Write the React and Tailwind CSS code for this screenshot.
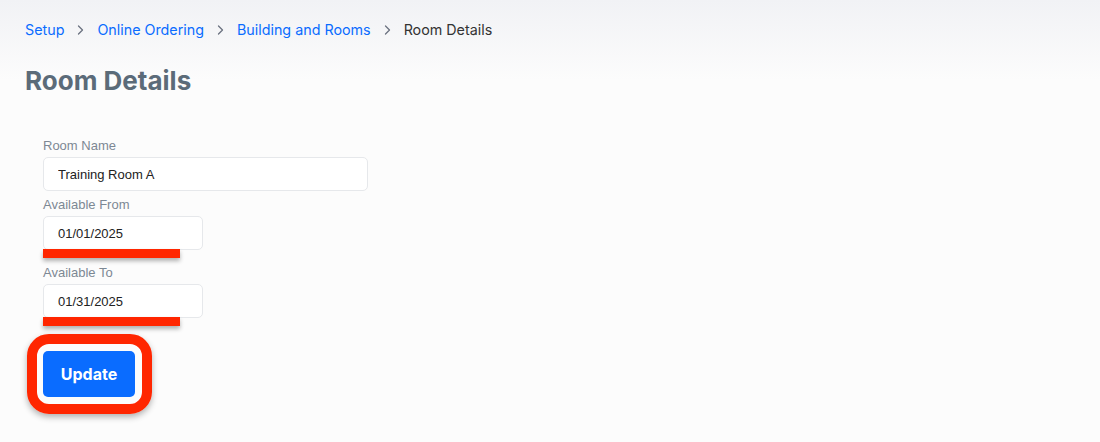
// Room details form with annotation marks
function Chevron() {
  return (
    <svg width="9" height="12" viewBox="0 0 9 12" className="mx-[12px]">
      <path d="M2.5 2 L6.5 6 L2.5 10" fill="none" stroke="#6b7280" strokeWidth="1.3" strokeLinecap="round" strokeLinejoin="round" />
    </svg>
  );
}

function Field({ label, value, width, className, marked }) {
  return (
    <div className={className}>
      <label className="block text-[13px] leading-[16px] text-[#7d8894] font-['Liberation_Sans',sans-serif]">
        {label}
      </label>
      <div className="relative mt-[3px]" style={{ width }}>
        <input
          readOnly
          value={value}
          className="w-full h-[34px] px-[14px] bg-white border border-[#e6e8eb] rounded-[5px] text-[13px] text-[#222] font-['Liberation_Sans',sans-serif] outline-none"
        />
        {marked && (
          <div className="absolute left-0 top-[33px] w-[137px] h-[9px] bg-[#ff2600] shadow-[0_3px_4px_rgba(0,0,0,0.3)]" />
        )}
      </div>
    </div>
  );
}

export default function App() {
  return (
    <div className="min-h-[442px] bg-[#fcfcfc] font-['Inter',sans-serif]">
      <div className="bg-gradient-to-b from-[#f1f2f5] to-[#fcfcfc] px-[25px] pt-[20px] h-[80px]">
        {/* Breadcrumb */}
        <nav className="flex items-center text-[14.3px] leading-[20px]">
          <a className="text-[#0a6cff]">Setup</a>
          <Chevron />
          <a className="text-[#0a6cff]">Online Ordering</a>
          <Chevron />
          <a className="text-[#0a6cff]">Building and Rooms</a>
          <Chevron />
          <span className="text-[#333]">Room Details</span>
        </nav>
      </div>

      <div className="px-[25px] -mt-[15px]">
        <h1 className="text-[26px] leading-[32px] font-bold text-[#5b6b79]">Room Details</h1>

        <div className="pl-[18px] pt-[42px]">
          <Field label="Room Name" value="Training Room A" width={325} className="-mt-[1px]" />
          <Field label="Available From" value="01/01/2025" width={160} className="mt-[6px]" marked />
          <Field label="Available To" value="01/31/2025" width={160} className="mt-[15px]" marked />

          <div className="relative mt-[33px] w-[92px]">
            <div className="absolute -left-[16px] -top-[17px] w-[125px] h-[80px] rounded-[22px] border-[10px] border-[#ff2600] shadow-[0_3px_6px_rgba(0,0,0,0.3)]" />
            <button className="relative w-[92px] h-[46px] rounded-[5px] bg-[#0a6cff] text-white text-[16px] font-bold">
              Update
            </button>
          </div>
        </div>
      </div>
    </div>
  );
}
